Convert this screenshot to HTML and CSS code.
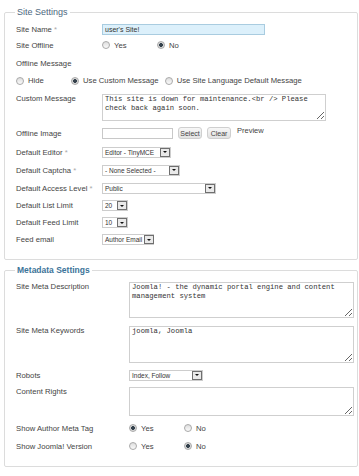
FILE: index.html
```html
<!DOCTYPE html>
<html lang="en">

<head>
  <meta charset="UTF-8">
  <meta name="viewport" content="width=device-width, initial-scale=1.0">
  <title>Global Configuration</title>
  <link rel="stylesheet" href="styles.css">
</head>

<body>
  <fieldset class="panel site">
    <legend>Site Settings</legend>

    <div class="row short">
      <label>Site Name <span class="star">*</span></label>
      <input class="field name" type="text" value="user's Site!">
    </div>

    <div class="row short">
      <label>Site Offline</label>
      <span class="opt"><i class="radio"></i>Yes</span>
      <span class="opt"><i class="radio on"></i>No</span>
    </div>

    <div class="row gap-2">
      <label class="wide">Offline Message</label>
    </div>

    <div class="row">
      <span class="opt"><i class="radio"></i>Hide</span>
      <span class="opt"><i class="radio on"></i>Use Custom Message</span>
      <span class="opt"><i class="radio"></i>Use Site Language Default Message</span>
    </div>

    <div class="row top gap-5">
      <label>Custom Message</label>
      <textarea class="area offline">This site is down for maintenance.&lt;br /&gt; Please check back again soon.</textarea>
    </div>

    <div class="row image gap-5">
      <label>Offline Image</label>
      <input class="field img" type="text" value="">
      <span class="btn">Select</span>
      <span class="btn">Clear</span>
      <span class="preview">Preview</span>
    </div>

    <div class="row tall gap-3">
      <label>Default Editor <span class="star">*</span></label>
      <span class="select editor">Editor - TinyMCE<b></b></span>
    </div>

    <div class="row tall">
      <label>Default Captcha <span class="star">*</span></label>
      <span class="select captcha">- None Selected -<b></b></span>
    </div>

    <div class="row tall">
      <label>Default Access Level <span class="star">*</span></label>
      <span class="select access">Public<b></b></span>
    </div>

    <div class="row">
      <label>Default List Limit</label>
      <span class="select num">20<b></b></span>
    </div>

    <div class="row">
      <label>Default Feed Limit</label>
      <span class="select num">10<b></b></span>
    </div>

    <div class="row">
      <label>Feed email</label>
      <span class="select email">Author Email<b></b></span>
    </div>
  </fieldset>

  <fieldset class="panel meta">
    <legend>Metadata Settings</legend>

    <div class="row top">
      <label>Site Meta Description</label>
      <textarea class="area desc">Joomla! - the dynamic portal engine and content management system</textarea>
    </div>

    <div class="row top gap-8">
      <label>Site Meta Keywords</label>
      <textarea class="area keys">joomla, Joomla</textarea>
    </div>

    <div class="row short gap-4">
      <label>Robots</label>
      <span class="select robots">Index, Follow<b></b></span>
    </div>

    <div class="row top gap-4">
      <label>Content Rights</label>
      <textarea class="area rights"></textarea>
    </div>

    <div class="row short gap-4">
      <label>Show Author Meta Tag</label>
      <span class="opt"><i class="radio on"></i>Yes</span>
      <span class="opt"><i class="radio"></i>No</span>
    </div>

    <div class="row short gap-2">
      <label>Show Joomla! Version</label>
      <span class="opt"><i class="radio"></i>Yes</span>
      <span class="opt"><i class="radio on"></i>No</span>
    </div>
  </fieldset>
</body>

</html>
```

FILE: styles.css
```css
* {
  margin: 0;
  padding: 0;
  box-sizing: border-box;
}

body {
  background: #fff;
  color: #444;
  font-family: "Liberation Sans", Arial, sans-serif;
  font-size: 7.7px;
  overflow: hidden;
}

/* fieldsets */

.panel {
  margin: 6px 1px 0 4px;
  padding: 3px 0 11px 11px;
  border: 1px solid #dcdcdc;
  border-radius: 2px;
  min-width: 0;
}

.panel>legend {
  margin-left: -1px;
  padding: 0 2px;
  line-height: 12px;
  font-size: 9px;
  color: #4d6880;
}

.meta {
  margin-top: 4px;
  padding: 6px 0 12px 11px;
}

.meta>legend {
  font-size: 8.5px;
  font-weight: bold;
  color: #3c7499;
}

/* rows */

.row {
  display: flex;
  align-items: center;
  height: 17px;
}

.row.short {
  height: 16px;
}

.row.tall {
  height: 18px;
}

.row.top {
  align-items: flex-start;
  height: auto;
}

.row.image {
  height: 14px;
}

.gap-2 { margin-top: 2px; }
.gap-3 { margin-top: 3px; }
.gap-4 { margin-top: 4px; }
.gap-5 { margin-top: 5px; }
.gap-8 { margin-top: 8px; }

.row>label {
  flex: none;
  width: 86px;
  line-height: 9px;
  white-space: nowrap;
}

.row>label.wide {
  width: auto;
}

.row.top>label {
  line-height: 10px;
}

.meta .row>label {
  width: 113px;
}

.star {
  color: #aaa;
}

/* radios */

.opt {
  display: flex;
  align-items: center;
  min-width: 55px;
  padding-right: 6px;
  white-space: nowrap;
}

.radio {
  flex: none;
  width: 8px;
  height: 8px;
  margin-right: 4px;
  border: 1px solid #a9a9a9;
  border-radius: 50%;
  background: linear-gradient(#dedede, #fafafa);
}

.radio.on {
  background: radial-gradient(circle, #34414c 0 1.6px, #d9d9d9 2.2px);
}

/* inputs */

.field {
  height: 11px;
  padding: 0 2px;
  border: 1px solid #c8c8c8;
  font-family: "Liberation Sans", Arial, sans-serif;
  font-size: 7px;
  color: #333;
  outline: none;
}

.field.name {
  width: 163px;
  border-color: #a9cce0;
  background: #dcf0fb;
}

.field.img {
  width: 71px;
}

.btn {
  display: flex;
  align-items: center;
  justify-content: center;
  width: 24px;
  height: 12px;
  margin-left: 5px;
  border: 1px solid #cfcfcf;
  border-radius: 3px;
  background: linear-gradient(#f7f7f7, #e2e2e2);
  font-size: 7px;
  color: #444;
}

.preview {
  margin: -5px 0 0 6px;
  font-size: 7.5px;
}

.select {
  display: flex;
  align-items: center;
  justify-content: space-between;
  height: 11px;
  padding-left: 2px;
  border: 1px solid #cdcdcd;
  background: #fff;
  font-size: 6.5px;
  color: #333;
  white-space: nowrap;
}

.select>b {
  display: flex;
  align-items: center;
  justify-content: center;
  flex: none;
  width: 10px;
  height: 9px;
  margin-left: 2px;
  border: 1px solid #6f6f6f;
  background: #e9e9e9;
}

.select>b::after {
  content: "";
  border-top: 2.5px solid #111;
  border-left: 2px solid transparent;
  border-right: 2px solid transparent;
}

.select.editor { width: 69px; }
.select.captcha { width: 78px; }
.select.access { width: 114px; }
.select.num { width: 26px; }
.select.email { width: 52px; }
.select.robots { width: 74px; }

/* textareas */

.area {
  display: block;
  padding: 0 2px;
  border: 1px solid #cfcfcf;
  font-family: "Liberation Mono", "Courier New", monospace;
  font-size: 7.2px;
  line-height: 9px;
  color: #333;
  overflow: hidden;
  outline: none;
}

.area.offline {
  width: 224px;
  height: 27px;
}

.area.desc {
  width: 225px;
  height: 36px;
}

.area.keys {
  width: 225px;
  height: 37px;
}

.area.rights {
  width: 225px;
  height: 29px;
}
```
